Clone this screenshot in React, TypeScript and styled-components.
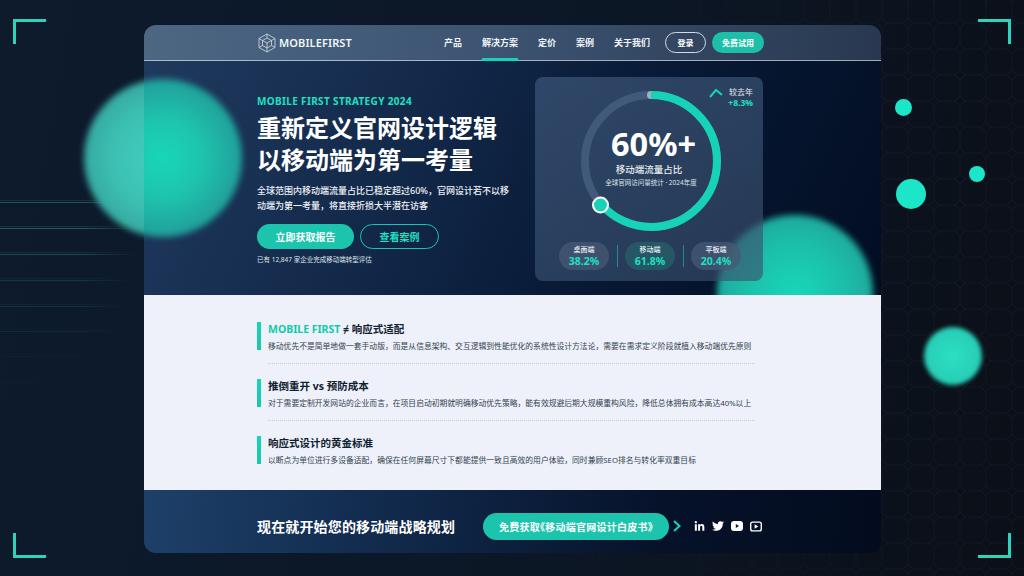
import React from "react";
import styled, { createGlobalStyle } from "styled-components";
import { FaLinkedinIn, FaTwitter } from "react-icons/fa";

const TEAL = "#16d3b8";
const FONT = `"Noto Sans", "Noto Sans CJK SC", sans-serif`;
const COMMA = "\uFF0C";

const navLinks = [
  { label: "产品" },
  { label: "解决方案", active: true },
  { label: "定价" },
  { label: "案例" },
  { label: "关于我们" },
];

const stats = [
  { label: "桌面端", value: "38.2%" },
  { label: "移动端", value: "61.8%", active: true },
  { label: "平板端", value: "20.4%" },
];

const points = [
  {
    title: "响应式适配",
    lead: "MOBILE FIRST",
    text: `移动优先不是简单地做一套手动版${COMMA}而是从信息架构、交互逻辑到性能优化的系统性设计方法论${COMMA}需要在需求定义阶段就植入移动端优先原则`,
  },
  {
    title: "推倒重开 vs 预防成本",
    text: `对于需要定制开发网站的企业而言${COMMA}在项目启动初期就明确移动优先策略${COMMA}能有效规避后期大规模重构风险${COMMA}降低总体拥有成本高达40%以上`,
  },
  {
    title: "响应式设计的黄金标准",
    text: `以断点为单位进行多设备适配${COMMA}确保在任何屏幕尺寸下都能提供一致且高效的用户体验${COMMA}同时兼顾SEO排名与转化率双重目标`,
  },
];

const scanLines = [
  { top: 200, width: 144, alpha: 0.4 },
  { top: 226, width: 140, alpha: 0.45 },
  { top: 252, width: 136, alpha: 0.35 },
  { top: 278, width: 132, alpha: 0.2 },
  { top: 304, width: 130, alpha: 0.16 },
  { top: 329, width: 126, alpha: 0.1 },
  { top: 354, width: 100, alpha: 0.05 },
  { top: 380, width: 50, alpha: 0.03 },
];

const RING_R = 66;
const RING_LEN = 2 * Math.PI * RING_R;

const App: React.FC = () => {
  return (
    <Page>
      <GlobalStyle />
      <GridPattern aria-hidden="true">
        <defs>
          <pattern id="octo" width="26" height="26" patternUnits="userSpaceOnUse" x="11" y="10">
            <path
              d="M13 0 L13 8 M13 18 L13 26 M0 13 L8 13 M18 13 L26 13 M13 8 L18 13 L13 18 L8 13 Z"
              fill="none"
              stroke="#8fb4c8"
              strokeOpacity="0.055"
            />
          </pattern>
          <linearGradient id="octoFade" x1="0" x2="1" y1="0" y2="0">
            <stop offset="0.55" stopColor="#fff" stopOpacity="0" />
            <stop offset="0.9" stopColor="#fff" stopOpacity="1" />
          </linearGradient>
          <mask id="octoMask">
            <rect width="1024" height="576" fill="url(#octoFade)" />
          </mask>
        </defs>
        <rect width="1024" height="576" fill="url(#octo)" mask="url(#octoMask)" />
      </GridPattern>

      {scanLines.map((l) => (
        <ScanLine key={l.top} style={{ top: l.top, width: l.width, opacity: l.alpha }} />
      ))}

      <Corner $side="tl" />
      <Corner $side="tr" />
      <Corner $side="bl" />
      <Corner $side="br" />

      <OuterBlob />
      <Dot $x={903} $y={107} $size={17} />
      <Dot $x={911} $y={194} $size={30} />
      <Dot $x={977} $y={174} $size={16} />
      <SoftDot />

      <Card>
        <Nav>
          <Logo>
            <LogoMark viewBox="0 0 20 20" aria-hidden="true">
              <path d="M10 1 L18 5.5 V14.5 L10 19 L2 14.5 V5.5 Z" />
              <path d="M10 5 L14.5 7.5 V12.5 L10 15 L5.5 12.5 V7.5 Z" />
              <path d="M10 1 V5 M18 5.5 L14.5 7.5 M2 5.5 L5.5 7.5 M10 19 V15 M18 14.5 L14.5 12.5 M2 14.5 L5.5 12.5 M10 10 L5.5 7.5 M10 10 L14.5 7.5 M10 10 V15" />
            </LogoMark>
            MOBILEFIRST
          </Logo>
          <NavLinks>
            {navLinks.map((l) => (
              <NavLink key={l.label} $active={l.active}>
                {l.label}
              </NavLink>
            ))}
          </NavLinks>
          <LoginButton>登录</LoginButton>
          <TrialButton>免费试用</TrialButton>
        </Nav>

        <Hero>
          <HeroBlobLeft />
          <HeroBlobRight />
          <HeroCopy>
            <Eyebrow>MOBILE FIRST STRATEGY 2024</Eyebrow>
            <HeroTitle>
              重新定义官网设计逻辑
              <br />
              以移动端为第一考量
            </HeroTitle>
            <HeroText>
              {`全球范围内移动端流量占比已稳定超过60%${COMMA}官网设计若不以移动端为第一考量${COMMA}将直接折损大半潜在访客`}
            </HeroText>
            <HeroActions>
              <PrimaryButton>立即获取报告</PrimaryButton>
              <SecondaryButton>查看案例</SecondaryButton>
            </HeroActions>
            <HeroNote>已有 12,847 家企业完成移动端转型评估</HeroNote>
          </HeroCopy>

          <StatPanel>
            <Trend>
              <svg width="14" height="10" viewBox="0 0 14 10" aria-hidden="true">
                <path d="M1 9 L7 2 L13 7" fill="none" stroke={TEAL} strokeWidth="2" />
              </svg>
              <TrendText>
                较去年
                <TrendValue>+8.3%</TrendValue>
              </TrendText>
            </Trend>
            <RingWrap>
              <svg width="140" height="140" viewBox="0 0 140 140" aria-hidden="true">
                <circle cx="70" cy="70" r={RING_R} fill="none" stroke="#41597a" strokeWidth="8" />
                <circle cx="70" cy="4" r="4" fill="#9fb0bd" />
                <circle
                  cx="70"
                  cy="70"
                  r={RING_R}
                  fill="none"
                  stroke={TEAL}
                  strokeWidth="8"
                  strokeDasharray={`${RING_LEN * 0.636} ${RING_LEN}`}
                  transform="rotate(-90 70 70)"
                />
                <circle cx="19.5" cy="114" r="7.5" fill={TEAL} stroke="#fff" strokeWidth="2" />
              </svg>
              <RingCenter>
                <RingValue>60%+</RingValue>
                <RingLabel>移动端流量占比</RingLabel>
                <RingSub>全球官网访问量统计 · 2024年度</RingSub>
              </RingCenter>
            </RingWrap>
            <StatRow>
              {stats.map((s, i) => (
                <React.Fragment key={s.label}>
                  {i > 0 && <StatDivider />}
                  <StatPill $active={s.active}>
                    <StatLabel>{s.label}</StatLabel>
                    <StatValue>{s.value}</StatValue>
                  </StatPill>
                </React.Fragment>
              ))}
            </StatRow>
          </StatPanel>
        </Hero>

        <Points>
          {points.map((p) => (
            <Point key={p.title}>
              <PointTitle>
                {p.lead && (
                  <>
                    <PointLead>{p.lead}</PointLead> ≠{" "}
                  </>
                )}
                {p.title}
              </PointTitle>
              <PointText>{p.text}</PointText>
            </Point>
          ))}
        </Points>

        <Cta>
          <CtaTitle>现在就开始您的移动端战略规划</CtaTitle>
          <CtaButton>免费获取《移动端官网设计白皮书》</CtaButton>
          <CtaArrow viewBox="0 0 8 12" aria-hidden="true">
            <path d="M1 1 L6.5 6 L1 11" fill="none" stroke={TEAL} strokeWidth="2" />
          </CtaArrow>
          <Socials>
            <FaLinkedinIn size={11} />
            <FaTwitter size={12} />
            <svg width="12" height="10" viewBox="0 0 12 10" aria-hidden="true">
              <rect width="12" height="10" rx="3" fill="#fff" />
              <path d="M4.8 3 L8 5 L4.8 7 Z" fill="#06122a" />
            </svg>
            <svg width="12" height="11" viewBox="0 0 13 11" aria-hidden="true">
              <rect x="0.75" y="0.75" width="11.5" height="9.5" rx="2" fill="none" stroke="#fff" strokeWidth="1.5" />
              <path d="M5 3 L9 5.5 L5 8 Z" fill="#fff" />
            </svg>
          </Socials>
        </Cta>
      </Card>
    </Page>
  );
};

export default App;

// Styled Components
const GlobalStyle = createGlobalStyle`
  html, body {
    margin: 0;
    padding: 0;
    background: #0c1420;
  }
  * {
    box-sizing: border-box;
  }
`;

const Page = styled.div`
  position: relative;
  width: 1024px;
  height: 576px;
  overflow: hidden;
  padding: 25px 143px 23px 144px;
  font-family: ${FONT};
  color: #fff;
  background: linear-gradient(100deg, #0d1b2d 0%, #0c1726 55%, #0b0f17 100%);
`;

const GridPattern = styled.svg`
  position: absolute;
  inset: 0;
  width: 1024px;
  height: 576px;
`;

const ScanLine = styled.div`
  position: absolute;
  left: 0;
  height: 3px;
  border-top: 1px solid rgba(120, 200, 190, 0.3);
  border-bottom: 1px solid #2fae9a;
  -webkit-mask-image: linear-gradient(90deg, #000 60%, transparent);
  mask-image: linear-gradient(90deg, #000 60%, transparent);
`;

const Corner = styled.div<{ $side: "tl" | "tr" | "bl" | "br" }>`
  position: absolute;
  width: 33px;
  height: 25px;
  border: 0 solid #2dd4bb;
  ${(p) => (p.$side[0] === "t" ? "top: 19px; border-top-width: 3px;" : "bottom: 18px; border-bottom-width: 3px;")}
  ${(p) => (p.$side[1] === "l" ? "left: 13px; border-left-width: 3px;" : "right: 13px; border-right-width: 3px;")}
`;

const OuterBlob = styled.div`
  position: absolute;
  left: 84px;
  top: 79px;
  width: 158px;
  height: 158px;
  border-radius: 50%;
  filter: blur(3px);
  background: radial-gradient(circle at 50% 50%, #42d0c0 0%, #3cc0b2 45%, #2f8f8e 100%);
`;

const Dot = styled.div<{ $x: number; $y: number; $size: number }>`
  position: absolute;
  left: ${(p) => p.$x - p.$size / 2}px;
  top: ${(p) => p.$y - p.$size / 2}px;
  width: ${(p) => p.$size}px;
  height: ${(p) => p.$size}px;
  border-radius: 50%;
  background: #1ce6c8;
`;

const SoftDot = styled.div`
  position: absolute;
  left: 924px;
  top: 327px;
  width: 58px;
  height: 58px;
  border-radius: 50%;
  filter: blur(2px);
  background: radial-gradient(circle, #2ce0c4 0%, #25c4ae 100%);
`;

const Card = styled.div`
  position: relative;
  height: 528px;
  border-radius: 12px;
  overflow: hidden;
  display: flex;
  flex-direction: column;
`;

const Nav = styled.nav`
  height: 36px;
  flex: none;
  display: flex;
  align-items: center;
  padding: 0 117px 0 113px;
  border-bottom: 1px solid rgba(225, 232, 240, 0.65);
  background: linear-gradient(95deg, #4d6783 0%, #3d5573 45%, #293850 100%);
`;

const Logo = styled.div`
  display: flex;
  align-items: center;
  gap: 2px;
  font-size: 11px;
  font-weight: 600;
  letter-spacing: 0.1px;
  color: #f2f6f8;
`;

const LogoMark = styled.svg`
  width: 20px;
  height: 20px;
  fill: none;
  stroke: #d5dee5;
  stroke-width: 0.8;
`;

const NavLinks = styled.div`
  margin-left: auto;
  align-self: stretch;
  display: flex;
  gap: 20px;
  margin-right: 15px;
`;

const NavLink = styled.a<{ $active?: boolean }>`
  display: flex;
  align-items: center;
  height: 36px;
  padding-top: 1px;
  font-size: 9px;
  font-weight: 700;
  color: #f1f4f7;
  border-bottom: 3px solid ${(p) => (p.$active ? TEAL : "transparent")};
`;

const LoginButton = styled.button`
  width: 41px;
  height: 21px;
  padding: 0;
  margin-right: 6px;
  font-family: inherit;
  font-size: 8px;
  font-weight: 700;
  color: #fff;
  background: transparent;
  border: 1px solid #d5dce3;
  border-radius: 11px;
`;

const TrialButton = styled.button`
  width: 52px;
  height: 21px;
  padding: 0;
  font-family: inherit;
  font-size: 8px;
  font-weight: 700;
  color: #fff;
  background: #1dbfa9;
  border: none;
  border-radius: 11px;
`;

const Hero = styled.section`
  position: relative;
  height: 234px;
  flex: none;
  overflow: hidden;
  display: flex;
  justify-content: space-between;
  padding: 16px 118px 14px 113px;
  background: linear-gradient(115deg, #1f3a5e 0%, #13294a 35%, #081a36 62%, #020d22 100%);
`;

const HeroBlobLeft = styled.div`
  position: absolute;
  left: -60px;
  top: 18px;
  width: 158px;
  height: 158px;
  border-radius: 50%;
  filter: blur(3px);
  background: radial-gradient(circle, #18d6b9 0%, #1ec4ad 35%, #219a98 75%, #23807f 100%);
`;

const HeroBlobRight = styled.div`
  position: absolute;
  left: 573px;
  top: 154px;
  width: 156px;
  height: 156px;
  border-radius: 50%;
  filter: blur(3px);
  background: radial-gradient(circle, #18d6b9 0%, #1cbfa9 45%, #208f8c 100%);
`;

const HeroCopy = styled.div`
  position: relative;
  width: 254px;
  padding-top: 17px;
`;

const Eyebrow = styled.div`
  font-size: 10px;
  line-height: 14px;
  font-weight: 700;
  letter-spacing: 0.35px;
  white-space: nowrap;
  color: #1fe0c2;
`;

const HeroTitle = styled.h1`
  margin: 4px 0 0;
  font-size: 24px;
  line-height: 32px;
  font-weight: 700;
  white-space: nowrap;
`;

const HeroText = styled.p`
  margin: 7px 0 0;
  font-size: 9px;
  line-height: 15px;
  font-weight: 500;
  color: #eef2f6;
`;

const HeroActions = styled.div`
  display: flex;
  gap: 6px;
  margin-top: 11px;
`;

const PrimaryButton = styled.button`
  width: 97px;
  height: 25px;
  padding: 0;
  font-family: inherit;
  font-size: 10px;
  font-weight: 700;
  color: #fff;
  background: #1cc4ae;
  border: none;
  border-radius: 13px;
`;

const SecondaryButton = styled.button`
  width: 79px;
  height: 25px;
  padding: 0;
  font-family: inherit;
  font-size: 10px;
  font-weight: 700;
  color: #1fe0c2;
  background: transparent;
  border: 1px solid #1cc4ae;
  border-radius: 13px;
`;

const HeroNote = styled.div`
  margin-top: 6px;
  font-size: 6.5px;
  line-height: 10px;
  color: #dfe5ea;
`;

const StatPanel = styled.div`
  position: relative;
  width: 228px;
  height: 204px;
  flex: none;
  padding-top: 14px;
  border-radius: 8px;
  background: linear-gradient(160deg, rgba(60, 85, 120, 0.72) 0%, rgba(58, 80, 110, 0.62) 100%);
`;

const Trend = styled.div`
  position: absolute;
  top: 9px;
  right: 10px;
  display: flex;
  align-items: flex-start;
  gap: 5px;
  svg {
    margin-top: 2px;
  }
`;

const TrendText = styled.div`
  font-size: 8px;
  line-height: 11px;
  color: #e5eaef;
  text-align: right;
`;

const TrendValue = styled.div`
  font-size: 8.5px;
  font-weight: 700;
  color: #1fe0c2;
`;

const RingWrap = styled.div`
  position: relative;
  width: 140px;
  height: 140px;
  margin-left: 46px;
  svg {
    display: block;
  }
`;

const RingCenter = styled.div`
  position: absolute;
  inset: 0;
  display: flex;
  flex-direction: column;
  align-items: center;
  padding-top: 34px;
`;

const RingValue = styled.div`
  margin-left: 5px;
  font-size: 32.5px;
  line-height: 38px;
  font-weight: 700;
`;

const RingLabel = styled.div`
  margin-right: 4px;
  font-size: 9.5px;
  line-height: 14px;
  font-weight: 500;
  color: #e6eaee;
`;

const RingSub = styled.div`
  font-size: 6.5px;
  line-height: 11px;
  white-space: nowrap;
  color: #dde3e9;
`;

const StatRow = styled.div`
  display: flex;
  align-items: center;
  gap: 7.5px;
  margin: 11px 0 0 24px;
`;

const StatPill = styled.div<{ $active?: boolean }>`
  width: 50px;
  height: 28px;
  display: flex;
  flex-direction: column;
  align-items: center;
  justify-content: center;
  border-radius: 14px;
  background: ${(p) => (p.$active ? "rgba(34, 110, 110, 0.55)" : "rgba(70, 90, 118, 0.75)")};
`;

const StatLabel = styled.div`
  font-size: 7px;
  line-height: 10px;
  font-weight: 500;
  color: #eef1f4;
`;

const StatValue = styled.div`
  font-size: 10.5px;
  line-height: 13px;
  font-weight: 700;
  color: #1fe0c2;
`;

const StatDivider = styled.div`
  width: 1px;
  height: 22px;
  background: #1d8f8a;
`;

const Points = styled.section`
  flex: 1;
  padding: 28px 126px 0 113px;
  background: #eef1fa;
`;

const Point = styled.div`
  position: relative;
  height: 28px;
  padding-left: 11px;
  color: #10212f;
  &::before {
    content: "";
    position: absolute;
    left: 0;
    top: 0;
    width: 4px;
    height: 28px;
    background: linear-gradient(180deg, #13d6b6, #1cc4ae);
  }
  & + & {
    margin-top: 30px;
  }
  & + &::after {
    content: "";
    position: absolute;
    left: 11px;
    right: 0;
    top: -16px;
    border-top: 1px dotted #c5cbd4;
  }
`;

const PointTitle = styled.h3`
  margin: -1px 0 0;
  font-size: 10.5px;
  line-height: 14px;
  font-weight: 700;
  white-space: nowrap;
`;

const PointLead = styled.span`
  color: #12c9ab;
`;

const PointText = styled.p`
  margin: 4px 0 0;
  font-size: 7.8px;
  line-height: 12px;
  white-space: nowrap;
  color: #33424f;
`;

const Cta = styled.section`
  height: 63px;
  flex: none;
  display: flex;
  align-items: center;
  padding: 9px 0 0 113px;
  background: linear-gradient(95deg, #1e4069 0%, #122c4f 30%, #06122a 70%, #030c1e 100%);
`;

const CtaTitle = styled.h2`
  margin: 0;
  width: 226px;
  flex: none;
  font-size: 14px;
  font-weight: 700;
  letter-spacing: 0.15px;
  white-space: nowrap;
`;

const CtaButton = styled.button`
  width: 186px;
  height: 27px;
  flex: none;
  padding: 0;
  font-family: inherit;
  font-size: 10px;
  font-weight: 700;
  font-feature-settings: "palt";
  letter-spacing: 0.25px;
  color: #fff;
  background: #1cc4ae;
  border: none;
  border-radius: 14px;
`;

const CtaArrow = styled.svg`
  width: 8px;
  height: 12px;
  margin-left: 4px;
  flex: none;
`;

const Socials = styled.div`
  display: flex;
  align-items: center;
  gap: 7px;
  margin-left: 13px;
  color: #fff;
`;
